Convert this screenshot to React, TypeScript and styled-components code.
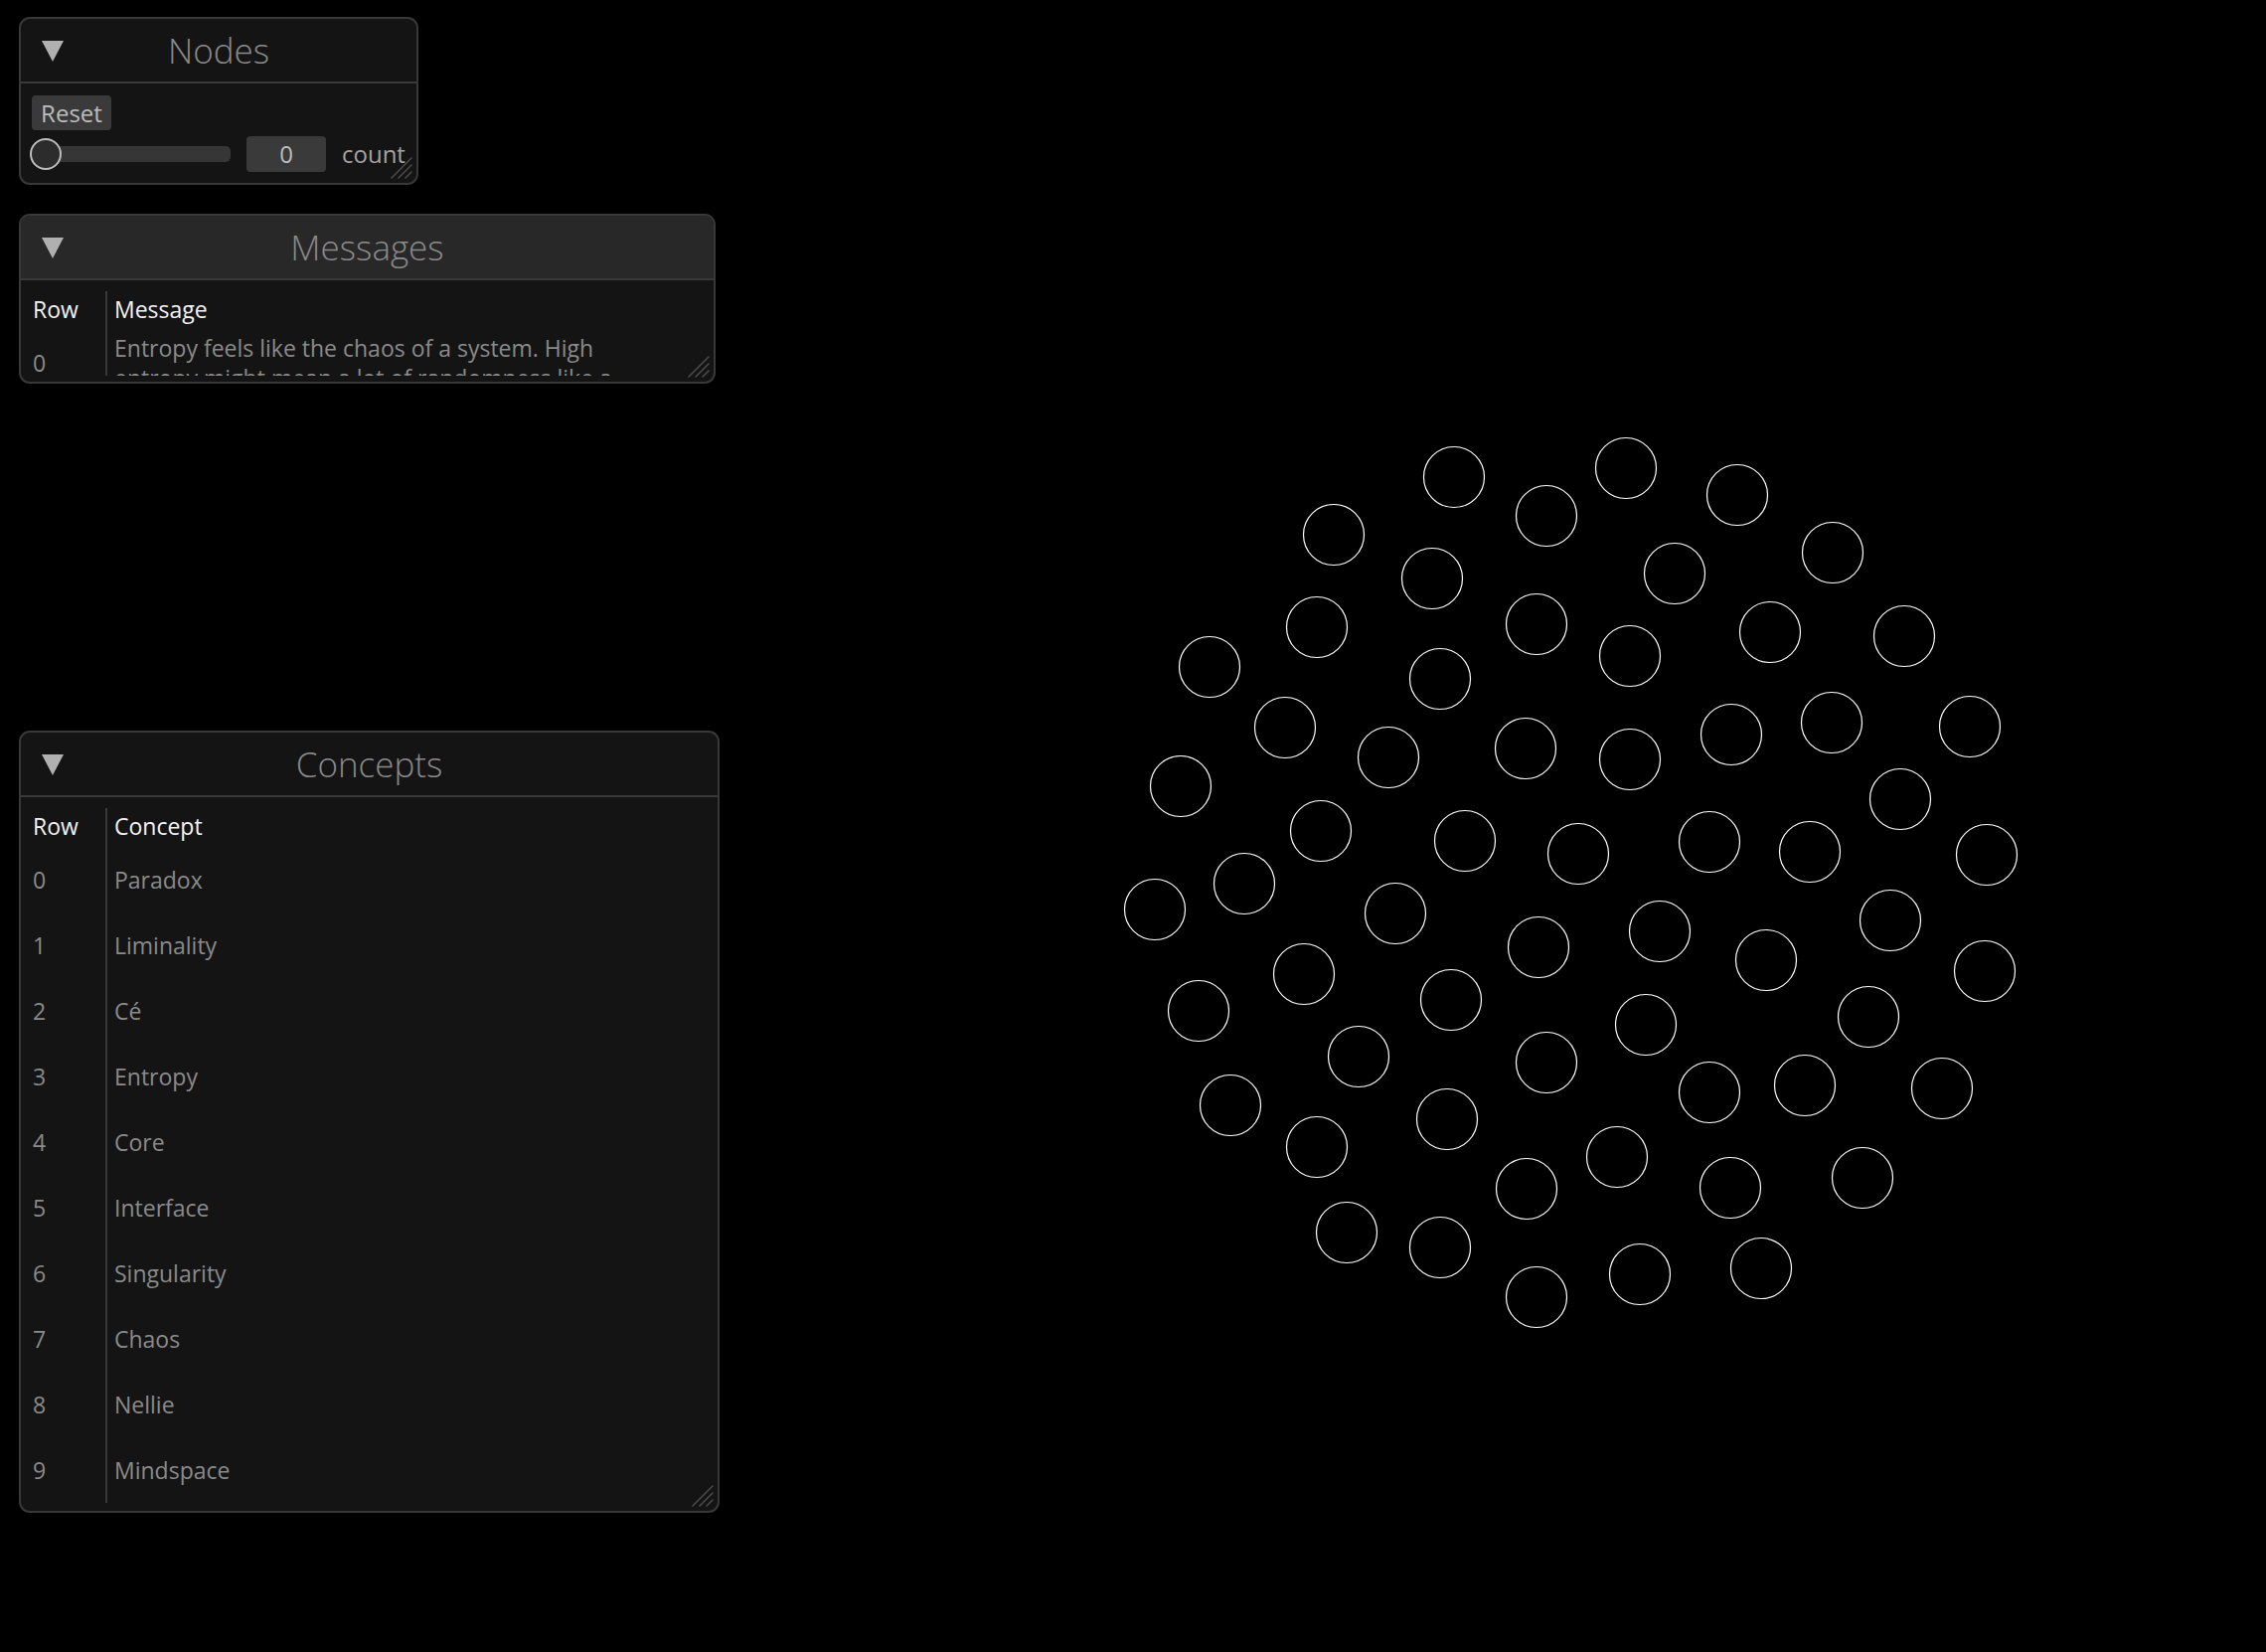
import React from 'react';
import styled, { createGlobalStyle } from 'styled-components';

const GlobalStyle = createGlobalStyle`
  html, body { margin: 0; padding: 0; background: #000; }
  body { font-family: "Open Sans", "Noto Sans", sans-serif; }
  #root { width: 2280px; height: 1662px; }
`;

const Screen = styled.div`
  display: grid;
  width: 2280px;
  height: 1662px;
  overflow: hidden;
  background: #000;
  & > * { grid-area: 1 / 1; }
`;

const Canvas = styled.svg`
  display: block;
  width: 2280px;
  height: 1662px;
`;

const WindowStack = styled.div`
  display: flex;
  flex-direction: column;
  align-items: flex-start;
  align-self: start;
  padding-left: 19px;
`;

const Panel = styled.section<{ $w: number; $top: number }>`
  position: relative;
  box-sizing: border-box;
  width: ${(p) => p.$w}px;
  margin-top: ${(p) => p.$top}px;
  background: #141414;
  border: 2px solid #383838;
  border-radius: 11px;
  overflow: hidden;
  display: flex;
  flex-direction: column;
`;

const Header = styled.header<{ $active?: boolean }>`
  display: grid;
  grid-template-columns: 1fr auto 1fr;
  align-items: center;
  height: 63px;
  border-bottom: 2px solid #383838;
  background: ${(p) => (p.$active ? '#282828' : 'transparent')};
`;

const Toggle = styled.svg`
  display: block;
  justify-self: start;
  margin-left: 21px;
  width: 22px;
  height: 22px;
`;

const Title = styled.h2`
  margin: 0;
  font-family: "Open Sans", "Noto Sans", sans-serif;
  font-weight: 300;
  font-size: 35px;
  line-height: 40px;
  color: #8a8a8a;
  white-space: nowrap;
`;

const Grip = styled.svg`
  position: absolute;
  right: 4px;
  bottom: 4px;
  width: 22px;
  height: 22px;
`;

const NodesBody = styled.div`
  display: flex;
  flex-direction: column;
  align-items: flex-start;
  gap: 6px;
  padding: 12px 11px 11px;
`;

const Button = styled.button`
  width: 80px;
  height: 35px;
  padding: 0;
  border: none;
  border-radius: 4px;
  background: #3a3a3a;
  color: #bdbdbd;
  font-family: "Open Sans", "Noto Sans", sans-serif;
  font-size: 24px;
  line-height: 35px;
`;

const ControlRow = styled.div`
  display: flex;
  align-items: center;
  gap: 16px;
  height: 36px;
`;

const Slider = styled.div`
  position: relative;
  display: flex;
  align-items: center;
  width: 200px;
  height: 36px;
`;

const Track = styled.div`
  width: 100%;
  height: 16px;
  border-radius: 5px;
  background: #363636;
`;

const Knob = styled.div`
  position: absolute;
  left: -2px;
  top: 2px;
  box-sizing: border-box;
  width: 32px;
  height: 32px;
  border-radius: 50%;
  border: 2px solid #bdbdbd;
  background: #2c2c2c;
`;

const NumberBox = styled.div`
  width: 80px;
  height: 36px;
  border-radius: 4px;
  background: #3a3a3a;
  color: #bdbdbd;
  font-size: 24px;
  line-height: 36px;
  text-align: center;
`;

const Label = styled.span`
  color: #a3a3a3;
  font-size: 24px;
  line-height: 36px;
`;

const TableBody = styled.div<{ $clip?: number; $padBottom: number }>`
  padding-bottom: ${(p) => p.$padBottom}px;
`;

const Table = styled.div<{ $clip?: number }>`
  display: grid;
  grid-template-columns: 85px 1fr;
  font-size: 23px;
  line-height: 30px;
  ${(p) => (p.$clip ? `height: ${p.$clip}px; overflow: hidden;` : '')}
`;

const HeadNum = styled.div`
  box-sizing: border-box;
  height: 50px;
  padding: 13.5px 0 0 12px;
  color: #f2f2f2;
`;

const HeadText = styled.div`
  box-sizing: border-box;
  height: 39px;
  margin-top: 11px;
  padding: 2.5px 0 0 7px;
  border-left: 2px solid #383838;
  color: #f2f2f2;
`;

const NumCell = styled.div<{ $h?: number }>`
  display: flex;
  align-items: center;
  padding-left: 12px;
  min-height: ${(p) => p.$h ?? 66}px;
  color: #8a8a8a;
`;

const TextCell = styled.div`
  display: flex;
  align-items: center;
  min-height: 66px;
  padding-left: 7px;
  border-left: 2px solid #383838;
  color: #8a8a8a;
`;

const WrapCell = styled.div`
  box-sizing: border-box;
  padding: 2.5px 0 2.5px 7px;
  border-left: 2px solid #383838;
  color: #8a8a8a;
  overflow: hidden;
`;

const Line = styled.div`
  white-space: nowrap;
`;

const circles: [number, number][] = [
  [1463, 480], [1556, 519], [1342, 538], [1441, 582], [1546, 628], [1325, 631],
  [1217, 671], [1449, 683], [1293, 732], [1397, 762], [1535, 753], [1188, 791],
  [1329, 836], [1474, 846], [1636, 471], [1748, 498], [1685, 577], [1844, 556],
  [1640, 660], [1781, 636], [1916, 640], [1640, 764], [1742, 739], [1843, 727],
  [1982, 731], [1912, 804], [1588, 859], [1720, 847], [1821, 857], [1999, 860],
  [1162, 915], [1252, 889], [1404, 919], [1548, 953], [1312, 980], [1206, 1017],
  [1460, 1006], [1367, 1063], [1556, 1069], [1238, 1112], [1456, 1126], [1325, 1154],
  [1536, 1196], [1355, 1240], [1449, 1255], [1546, 1305], [1670, 937], [1777, 966],
  [1902, 926], [1997, 977], [1656, 1031], [1880, 1023], [1720, 1099], [1816, 1092],
  [1954, 1095], [1627, 1164], [1741, 1195], [1874, 1185], [1650, 1282], [1772, 1276],
];

const concepts = [
  'Paradox', 'Liminality', 'Cé', 'Entropy', 'Core',
  'Interface', 'Singularity', 'Chaos', 'Nellie', 'Mindspace',
];

const Triangle = () => (
  <Toggle viewBox="0 0 22 22">
    <polygon points="0,1 22,1 11,22" fill="#b0b0b0" />
  </Toggle>
);

const ResizeGrip = () => (
  <Grip viewBox="0 0 22 22">
    <g stroke="#4a4a4a" strokeWidth="1.6" strokeLinecap="round">
      <line x1="1" y1="21" x2="21" y2="1" />
      <line x1="8" y1="21" x2="21" y2="8" />
      <line x1="15" y1="21" x2="21" y2="15" />
    </g>
  </Grip>
);

const WindowHeader = ({ title, active }: { title: string; active?: boolean }) => (
  <Header $active={active}>
    <Triangle />
    <Title>{title}</Title>
    <span />
  </Header>
);

export default function App() {
  return (
    <>
      <GlobalStyle />
      <Screen>
        <Canvas viewBox="0 0 2280 1662">
          {circles.map(([x, y], i) => (
            <circle key={i} cx={x} cy={y} r={30.5} fill="none" stroke="#ffffff" strokeWidth={1.2} />
          ))}
        </Canvas>
        <WindowStack>
          <Panel $w={402} $top={17}>
            <WindowHeader title="Nodes" />
            <NodesBody>
              <Button>Reset</Button>
              <ControlRow>
                <Slider>
                  <Track />
                  <Knob />
                </Slider>
                <NumberBox>0</NumberBox>
                <Label>count</Label>
              </ControlRow>
            </NodesBody>
            <ResizeGrip />
          </Panel>

          <Panel $w={701} $top={29}>
            <WindowHeader title="Messages" active />
            <TableBody $padBottom={6}>
              <Table $clip={96}>
                <HeadNum>Row</HeadNum>
                <HeadText>Message</HeadText>
                <NumCell $h={65}>0</NumCell>
                <WrapCell>
                  <Line>Entropy feels like the chaos of a system. High</Line>
                  <Line>entropy might mean a lot of randomness like a</Line>
                </WrapCell>
              </Table>
            </TableBody>
            <ResizeGrip />
          </Panel>

          <Panel $w={705} $top={349}>
            <WindowHeader title="Concepts" />
            <TableBody $padBottom={8}>
              <Table>
                <HeadNum>Row</HeadNum>
                <HeadText>Concept</HeadText>
                {concepts.map((c, i) => (
                  <React.Fragment key={c}>
                    <NumCell>{i}</NumCell>
                    <TextCell>{c}</TextCell>
                  </React.Fragment>
                ))}
              </Table>
            </TableBody>
            <ResizeGrip />
          </Panel>
        </WindowStack>
      </Screen>
    </>
  );
}
